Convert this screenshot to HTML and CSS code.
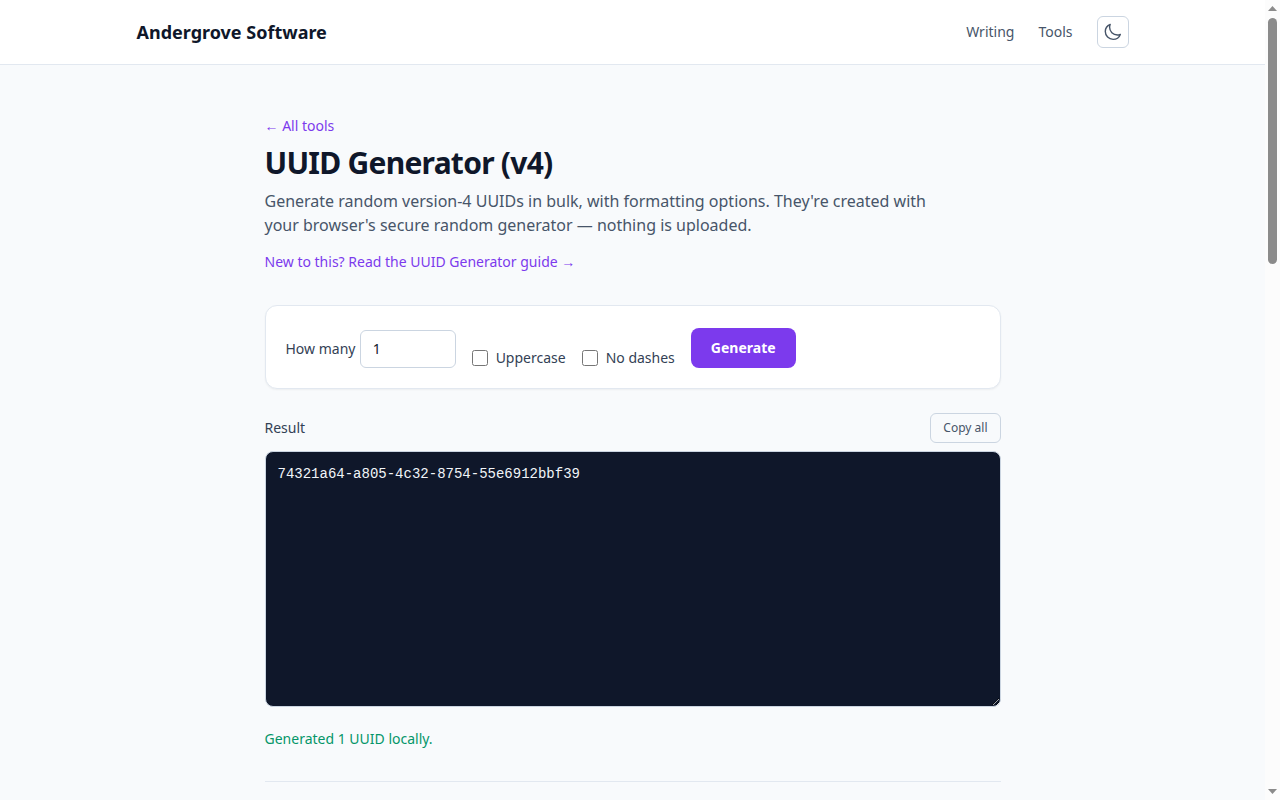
FILE: index.html
```html
<!DOCTYPE html>
<html lang="en">
<head>
<meta charset="UTF-8">
<meta name="viewport" content="width=device-width, initial-scale=1.0">
<title>UUID Generator (v4)</title>
<link rel="stylesheet" href="styles.css">
</head>
<body>

<div id="scroll-area" class="scroll-area">
<header class="site-header">
    <div class="header-inner">
        <a href="#" class="brand">Andergrove Software</a>
        <nav class="site-nav">
            <a href="#">Writing</a>
            <a href="#">Tools</a>
            <button type="button" class="theme-toggle" aria-label="Toggle dark mode">
                <svg viewBox="0 0 20 20" width="20" height="20" fill="none" stroke="currentColor" stroke-width="1.4" stroke-linecap="round" stroke-linejoin="round" aria-hidden="true">
                    <path d="M17.3 12.4A7.8 7.8 0 0 1 14.4 13C10 13 6.6 9.5 6.6 5.3 6.6 4.2 6.8 3.3 7.2 2.5A7.6 7.6 0 0 0 2.3 9.6C2.3 13.9 5.8 17.4 10.1 17.4A7.7 7.7 0 0 0 17.3 12.4Z"/>
                </svg>
            </button>
        </nav>
    </div>
</header>

<main class="page">
    <a href="#" class="text-link">← All tools</a>
    <h1>UUID Generator (v4)</h1>
    <p class="intro">Generate random version-4 UUIDs in bulk, with formatting options. They're created with your browser's secure random generator — nothing is uploaded.</p>
    <p class="guide"><a href="#" class="text-link">New to this? Read the UUID Generator guide →</a></p>

    <!-- Options -->
    <form class="card" onsubmit="event.preventDefault(); generate();">
        <div>
            <label for="count" class="label">How many</label>
            <input id="count" class="count" type="number" min="1" max="1000" value="1">
        </div>
        <label class="check"><input id="uppercase" type="checkbox"> Uppercase</label>
        <label class="check"><input id="no-dashes" type="checkbox"> No dashes</label>
        <button type="submit" class="generate">Generate</button>
    </form>

    <!-- Result -->
    <div class="result-header">
        <label for="output" class="label">Result</label>
        <button type="button" class="copy" onclick="copyAll()">Copy all</button>
    </div>
    <textarea id="output" class="output" readonly spellcheck="false">74321a64-a805-4c32-8754-55e6912bbf39</textarea>
    <p id="status" class="status">Generated 1 UUID locally.</p>

    <section class="more"></section>
</main>
</div>

<!-- Scrollbar -->
<div class="scrollbar" aria-hidden="true">
    <svg class="arrow" viewBox="0 0 9 5" width="9" height="5"><path d="M4.5 0L9 5H0Z"/></svg>
    <div class="track"><div id="thumb" class="thumb"></div></div>
    <svg class="arrow" viewBox="0 0 9 5" width="9" height="5"><path d="M0 0H9L4.5 5Z"/></svg>
</div>

<script>
    const output = document.getElementById('output');
    const statusLine = document.getElementById('status');
    const area = document.getElementById('scroll-area');
    const thumb = document.getElementById('thumb');

    // Version 4: random bytes with the version and variant bits set
    function uuid() {
        const b = crypto.getRandomValues(new Uint8Array(16));
        b[6] = (b[6] & 0x0f) | 0x40;
        b[8] = (b[8] & 0x3f) | 0x80;
        const hex = Array.from(b, x => x.toString(16).padStart(2, '0')).join('');
        return hex.replace(/^(.{8})(.{4})(.{4})(.{4})(.{12})$/, '$1-$2-$3-$4-$5');
    }

    function generate() {
        const count = Math.min(1000, Math.max(1, Number(document.getElementById('count').value) || 1));
        let text = Array.from({ length: count }, uuid).join('\n');
        if (document.getElementById('no-dashes').checked) text = text.replace(/-/g, '');
        if (document.getElementById('uppercase').checked) text = text.toUpperCase();
        output.value = text;
        statusLine.textContent = `Generated ${count} UUID${count === 1 ? '' : 's'} locally.`;
    }

    function copyAll() {
        navigator.clipboard.writeText(output.value);
    }

    function updateThumb() {
        thumb.style.height = `${area.clientHeight / area.scrollHeight * 100}%`;
        thumb.style.marginTop = `${area.scrollTop / area.scrollHeight * thumb.parentElement.clientHeight}px`;
    }

    area.addEventListener('scroll', updateThumb);
    window.addEventListener('resize', updateThumb);
    updateThumb();
</script>

</body>
</html>
```
FILE: styles.css
```css
*, *::before, *::after {
    box-sizing: border-box;
}

body {
    display: flex;
    height: 100vh;
    margin: 0;
    font-family: "Noto Sans", sans-serif;
    font-size: 16px;
    line-height: 24px;
    color: #0f172a;
    background-color: #f8fafc;
}

h1, p {
    margin: 0;
}

a {
    text-decoration: none;
}

button, input, textarea {
    font-family: inherit;
    font-size: 14px;
    line-height: 20px;
    color: inherit;
    margin: 0;
}

button {
    cursor: pointer;
}

/* Scrolling */
.scroll-area {
    flex: 1;
    overflow-y: auto;
    scrollbar-width: none;
}

.scrollbar {
    display: flex;
    flex-direction: column;
    align-items: center;
    gap: 7px;
    width: 15px;
    padding: 6px 0;
    background-color: #fcfcfc;
}

.arrow {
    flex: none;
    fill: #8b8b8b;
}

.track {
    flex: 1;
    width: 9px;
}

.thumb {
    border-radius: 5px;
    background-color: #8b8b8b;
}

/* Header */
.site-header {
    background-color: #ffffff;
    border-bottom: 1px solid #e2e8f0;
}

.header-inner {
    display: flex;
    align-items: center;
    justify-content: space-between;
    max-width: 1024px;
    margin: 0 auto;
    padding: 16px;
}

.brand {
    font-size: 18px;
    line-height: 28px;
    font-weight: 700;
    color: #0f172a;
}

.site-nav {
    display: flex;
    align-items: center;
    gap: 24px;
    font-size: 14px;
    line-height: 20px;
}

.site-nav a {
    color: #475569;
}

.theme-toggle {
    display: flex;
    align-items: center;
    justify-content: center;
    width: 32px;
    height: 32px;
    padding: 0;
    color: #475569;
    background: transparent;
    border: 1px solid #cbd5e1;
    border-radius: 6px;
}

/* Page intro */
.page {
    max-width: 768px;
    margin: 0 auto;
    padding: 48px 16px;
}

.text-link {
    font-size: 14px;
    line-height: 20px;
    color: #7c3aed;
}

h1 {
    margin-top: 8px;
    font-size: 30px;
    line-height: 36px;
    font-weight: 700;
    letter-spacing: -0.025em;
}

.intro {
    max-width: 672px;
    margin-top: 8px;
    color: #475569;
}

.guide {
    margin-top: 12px;
}

/* Options */
.card {
    display: flex;
    flex-wrap: wrap;
    align-items: flex-end;
    gap: 16px;
    margin-top: 32px;
    padding: 22px 20px 20px;
    background-color: #ffffff;
    border: 1px solid #e2e8f0;
    border-radius: 12px;
    box-shadow: 0 1px 2px rgba(0, 0, 0, 0.05);
}

.label, .check {
    font-size: 14px;
    line-height: 20px;
    color: #334155;
}

.count {
    width: 96px;
    padding: 8px 12px;
    color: #0f172a;
    background-color: #ffffff;
    border: 1px solid #cbd5e1;
    border-radius: 6px;
}

.check {
    display: flex;
    align-items: center;
    gap: 8px;
}

.check input {
    width: 16px;
    height: 16px;
}

.generate {
    padding: 10px 20px;
    font-weight: 700;
    color: #ffffff;
    background-color: #7c3aed;
    border: 0;
    border-radius: 8px;
}

/* Result */
.result-header {
    display: flex;
    align-items: center;
    justify-content: space-between;
    margin-top: 24px;
}

.copy {
    padding: 6px 12px;
    font-size: 12px;
    line-height: 16px;
    color: #475569;
    background: transparent;
    border: 1px solid #cbd5e1;
    border-radius: 6px;
}

.output {
    width: 100%;
    height: 256px;
    margin-top: 8px;
    padding: 12px;
    font-family: "Liberation Mono", monospace;
    color: #f1f5f9;
    background-color: #0f172a;
    border: 1px solid #cbd5e1;
    border-radius: 8px;
}

.status {
    margin-top: 16px;
    font-size: 14px;
    line-height: 20px;
    color: #059669;
}

.more {
    min-height: 1656px;
    margin-top: 32px;
    border-top: 1px solid #e2e8f0;
}
```
